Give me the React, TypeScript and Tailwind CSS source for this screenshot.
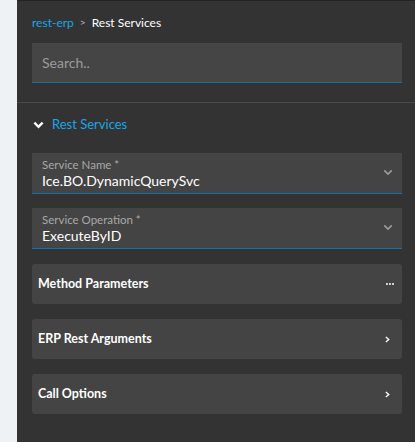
import React from 'react';

const font = { fontFamily: 'Lato, "Noto Sans", sans-serif' };

const Chevron: React.FC<{ className?: string; width?: number }> = ({ className = '', width = 2 }) => (
    <svg viewBox="0 0 12 8" className={className} fill="none" stroke="currentColor" strokeWidth={width}>
        <path d="M1.5 1.5 L6 6 L10.5 1.5" />
    </svg>
);

const SelectField: React.FC<{ label: string; value: string }> = ({ label, value }) => (
    <div className="relative h-[41px] bg-[#444444] border-b border-[#1b6fa3] pl-[10px] pr-8 pt-[5px]">
        <div className="text-[11.5px] leading-[14px] text-[#a8a8a8]">{label}</div>
        <div className="text-[14px] leading-[18px] text-white">{value}</div>
        <Chevron className="absolute right-[9px] top-[16px] w-[10px] h-[7px] text-[#9a9a9a]" />
    </div>
);

const Card: React.FC<{ title: string; icon: 'dots' | 'arrow' }> = ({ title, icon }) => (
    <div className="h-10 bg-[#444444] rounded-[3px] flex items-center justify-between pl-[6px] pr-[10px]">
        <span className="text-[12.5px] font-bold text-white">{title}</span>
        {icon === 'dots' ? (
            <span className="flex gap-[1px] mr-[-2px]">
                <span className="w-[2px] h-[2px] bg-white rounded-full" />
                <span className="w-[2px] h-[2px] bg-white rounded-full" />
                <span className="w-[2px] h-[2px] bg-white rounded-full" />
            </span>
        ) : (
            <svg viewBox="0 0 6 8" className="w-[5px] h-[7px] mr-[2px] text-white" fill="none" stroke="currentColor" strokeWidth={1.6}>
                <path d="M1 1 L4.5 4 L1 7" />
            </svg>
        )}
    </div>
);

export default function App() {
    return (
        <div className="w-[415px] h-[442px] flex bg-[#333333] overflow-hidden" style={font}>
            <div className="w-[17px] shrink-0 bg-[#eef2f5]" />
            <div className="flex-1 flex flex-col border-t border-[#232323]">
                <div className="px-[15px] pr-[13px]">
                    <div className="h-[42px] flex items-center gap-[6px] text-[12px] pt-[1px]">
                        <span className="text-[#1aa5e6]">rest-erp</span>
                        <span className="text-[#bbbbbb] text-[10px]">&gt;</span>
                        <span className="text-white">Rest Services</span>
                    </div>
                    <div className="h-10 bg-[#454545] border-b border-[#1b6fa3] flex items-center pl-[10px] text-[14px] text-[#9c9c9c]">
                        Search..
                    </div>
                </div>
                <div className="mt-[19px] border-t border-[#4a4a4a]" />
                <div className="px-[15px] pr-[13px]">
                    <div className="h-[42px] flex items-center gap-[8px] pl-[1px] pt-[1px]">
                        <Chevron className="w-[11px] h-[8px] text-white" width={2.6} />
                        <span className="text-[13px] text-[#1aa5e6]">Rest Services</span>
                    </div>
                    <div className="mt-[8px] flex flex-col gap-[14px]">
                        <SelectField label="Service Name *" value="Ice.BO.DynamicQuerySvc" />
                        <SelectField label="Service Operation *" value="ExecuteByID" />
                    </div>
                    <div className="mt-[15px] flex flex-col gap-[15px]">
                        <Card title="Method Parameters" icon="dots" />
                        <Card title="ERP Rest Arguments" icon="arrow" />
                        <Card title="Call Options" icon="arrow" />
                    </div>
                </div>
            </div>
        </div>
    );
}
